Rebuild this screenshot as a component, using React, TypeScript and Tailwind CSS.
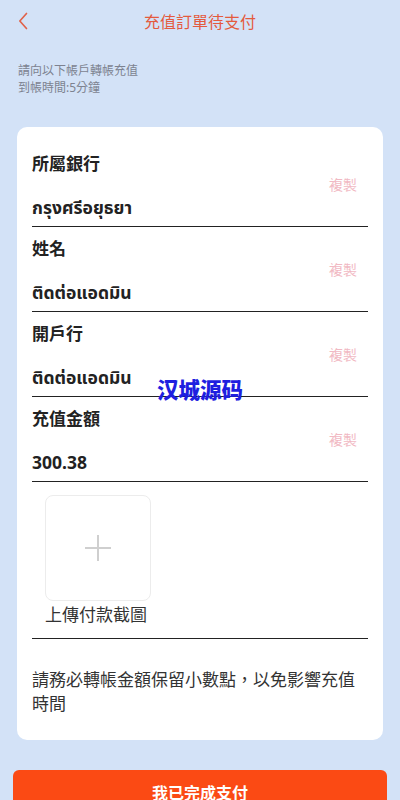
import React from 'react';

const rows = [
  { label: '所屬銀行', value: 'กรุงศรีอยุธยา' },
  { label: '姓名', value: 'ติดต่อแอดมิน' },
  { label: '開戶行', value: 'ติดต่อแอดมิน' },
  { label: '充值金額', value: '300.38' },
];

const font = { fontFamily: '"Noto Sans", "Noto Sans CJK TC", "Noto Sans Thai", sans-serif' };

export default function App() {
  return (
    <div className="relative min-h-[800px] w-[400px] bg-[#d3e2f7]" style={font}>
      <div className="relative flex h-[44px] items-center justify-center">
        <button className="absolute left-[14px] top-[11px] flex h-[20px] w-[20px] items-center justify-center">
          <svg viewBox="0 0 24 24" className="h-[20px] w-[20px]" fill="none" stroke="#e0624a" strokeWidth="2" strokeLinecap="round" strokeLinejoin="round">
            <path d="M15 3l-8 9 8 9" />
          </svg>
        </button>
        <h1 className="text-[16px] leading-none text-[#e45a3e]">充值訂單待支付</h1>
      </div>

      <div className="px-[18px] pt-[18px] text-[12px] leading-[17px] text-[#7d8290]">
        <p>請向以下帳戶轉帳充值</p>
        <p>到帳時間:5分鐘</p>
      </div>

      <div className="mx-[17px] mt-[31px] rounded-[10px] bg-white px-[15px] pt-[15px] pb-[24px]">
        {rows.map((r) => (
          <div key={r.label} className="border-b border-[#222] pb-[6px] pt-[10px]">
            <div className="text-[17px] font-bold leading-[24px] text-[#222]">{r.label}</div>
            <div className="flex justify-end pr-[11px] text-[14px] leading-[18px] text-[#f1b9c3]">複製</div>
            <div className="text-[17.5px] font-bold leading-[26px] text-[#222]">{r.value}</div>
          </div>
        ))}

        <div className="border-b border-[#222] pb-[12px] pl-[13px] pt-[13px]">
          <div className="flex h-[106px] w-[106px] items-center justify-center rounded-[8px] border border-[#ececec]">
            <svg viewBox="0 0 28 28" className="h-[28px] w-[28px]" fill="none" stroke="#cfcfcf" strokeWidth="2">
              <path d="M14 1v26M1 14h26" />
            </svg>
          </div>
          <div className="mt-[3px] text-[17px] leading-[22px] text-[#333]">上傳付款截圖</div>
        </div>

        <p className="mt-[29px] text-[17px] leading-[24px] text-[#333]">請務必轉帳金額保留小數點，以免影響充值時間</p>
      </div>

      <div className="mx-[13px] mt-[30px]">
        <button className="h-[46px] w-full rounded-[6px] bg-[#fb4a14] text-[16px] font-bold text-white">我已完成支付</button>
      </div>

      <div className="pointer-events-none absolute left-[157px] top-[377px] text-[21.5px] font-black leading-[26px] text-[#1f1fe0]">汉城源码</div>
    </div>
  );
}
